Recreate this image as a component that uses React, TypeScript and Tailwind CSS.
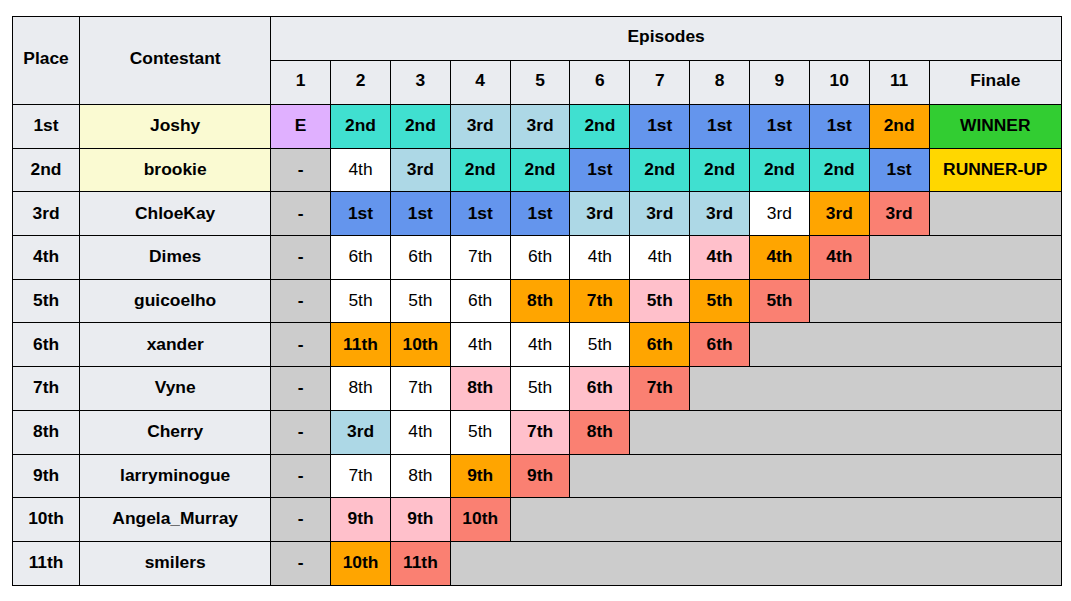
type Tone = 'w' | 'tq' | 'lb' | 'cf' | 'or' | 'pk' | 'sa' | 'mv' | 'gr' | 'gn' | 'gd'

const tones: Record<Tone, string> = {
  w: 'bg-white font-normal',
  tq: 'bg-[#40e0d0] font-bold',
  lb: 'bg-[#add8e6] font-bold',
  cf: 'bg-[#6495ed] font-bold',
  or: 'bg-[#ffa500] font-bold',
  pk: 'bg-[#ffc0cb] font-bold',
  sa: 'bg-[#fa8072] font-bold',
  mv: 'bg-[#e0b0ff] font-bold',
  gr: 'bg-[#cccccc] font-bold',
  gn: 'bg-[#32cd32] font-bold',
  gd: 'bg-[#ffd700] font-bold',
}

type Cell = [string, Tone]

type Row = {
  place: string
  name: string
  finalist?: boolean
  cells: Cell[]
  out?: number
}

const rows: Row[] = [
  {
    place: '1st',
    name: 'Joshy',
    finalist: true,
    cells: [
      ['E', 'mv'], ['2nd', 'tq'], ['2nd', 'tq'], ['3rd', 'lb'], ['3rd', 'lb'], ['2nd', 'tq'],
      ['1st', 'cf'], ['1st', 'cf'], ['1st', 'cf'], ['1st', 'cf'], ['2nd', 'or'], ['WINNER', 'gn'],
    ],
  },
  {
    place: '2nd',
    name: 'brookie',
    finalist: true,
    cells: [
      ['-', 'gr'], ['4th', 'w'], ['3rd', 'lb'], ['2nd', 'tq'], ['2nd', 'tq'], ['1st', 'cf'],
      ['2nd', 'tq'], ['2nd', 'tq'], ['2nd', 'tq'], ['2nd', 'tq'], ['1st', 'cf'], ['RUNNER-UP', 'gd'],
    ],
  },
  {
    place: '3rd',
    name: 'ChloeKay',
    cells: [
      ['-', 'gr'], ['1st', 'cf'], ['1st', 'cf'], ['1st', 'cf'], ['1st', 'cf'], ['3rd', 'lb'],
      ['3rd', 'lb'], ['3rd', 'lb'], ['3rd', 'w'], ['3rd', 'or'], ['3rd', 'sa'],
    ],
    out: 1,
  },
  {
    place: '4th',
    name: 'Dimes',
    cells: [
      ['-', 'gr'], ['6th', 'w'], ['6th', 'w'], ['7th', 'w'], ['6th', 'w'], ['4th', 'w'],
      ['4th', 'w'], ['4th', 'pk'], ['4th', 'or'], ['4th', 'sa'],
    ],
    out: 2,
  },
  {
    place: '5th',
    name: 'guicoelho',
    cells: [
      ['-', 'gr'], ['5th', 'w'], ['5th', 'w'], ['6th', 'w'], ['8th', 'or'], ['7th', 'or'],
      ['5th', 'pk'], ['5th', 'or'], ['5th', 'sa'],
    ],
    out: 3,
  },
  {
    place: '6th',
    name: 'xander',
    cells: [
      ['-', 'gr'], ['11th', 'or'], ['10th', 'or'], ['4th', 'w'], ['4th', 'w'], ['5th', 'w'],
      ['6th', 'or'], ['6th', 'sa'],
    ],
    out: 4,
  },
  {
    place: '7th',
    name: 'Vyne',
    cells: [
      ['-', 'gr'], ['8th', 'w'], ['7th', 'w'], ['8th', 'pk'], ['5th', 'w'], ['6th', 'pk'], ['7th', 'sa'],
    ],
    out: 5,
  },
  {
    place: '8th',
    name: 'Cherry',
    cells: [['-', 'gr'], ['3rd', 'lb'], ['4th', 'w'], ['5th', 'w'], ['7th', 'pk'], ['8th', 'sa']],
    out: 6,
  },
  {
    place: '9th',
    name: 'larryminogue',
    cells: [['-', 'gr'], ['7th', 'w'], ['8th', 'w'], ['9th', 'or'], ['9th', 'sa']],
    out: 7,
  },
  {
    place: '10th',
    name: 'Angela_Murray',
    cells: [['-', 'gr'], ['9th', 'pk'], ['9th', 'pk'], ['10th', 'sa']],
    out: 8,
  },
  {
    place: '11th',
    name: 'smilers',
    cells: [['-', 'gr'], ['10th', 'or'], ['11th', 'sa']],
    out: 9,
  },
]

const episodes = ['1', '2', '3', '4', '5', '6', '7', '8', '9', '10', '11']

// header cells sit a touch higher than body cells in the reference
const headCell = 'border border-black bg-[#eaecf0] p-0 pb-[4px] text-center align-middle font-bold'
const bodyCell = 'border border-black p-0 pb-[2px] text-center align-middle'

export default function App() {
  return (
    <div className="min-h-[601px] w-[1071px] bg-white pl-[12px] pt-[16px] font-['Liberation_Sans',Arial,sans-serif] text-[17.4px] text-black">
      <table className="w-[1050px] table-fixed border-collapse">
        <colgroup>
          <col className="w-[67px]" />
          <col className="w-[191px]" />
          {episodes.map((e) => (
            <col key={e} className="w-[59.8px]" />
          ))}
          <col className="w-[132px]" />
        </colgroup>
        <thead>
          <tr className="h-[44px]">
            <th rowSpan={2} className={headCell}>
              Place
            </th>
            <th rowSpan={2} className={headCell}>
              Contestant
            </th>
            <th colSpan={12} className={headCell}>
              Episodes
            </th>
          </tr>
          <tr className="h-[44px]">
            {episodes.map((e) => (
              <th key={e} className={headCell}>
                {e}
              </th>
            ))}
            <th className={headCell}>Finale</th>
          </tr>
        </thead>
        <tbody>
          {rows.map((row) => (
            <tr key={row.place} className="h-[43.7px]">
              <td className={`${bodyCell} bg-[#eaecf0] font-bold`}>{row.place}</td>
              <td
                className={`${bodyCell} font-bold ${
                  row.finalist ? 'bg-[#fafad2]' : 'bg-[#eaecf0]'
                }`}
              >
                {row.name}
              </td>
              {row.cells.map(([text, tone], i) => (
                <td key={i} className={`${bodyCell} ${tones[tone]}`}>
                  {text}
                </td>
              ))}
              {row.out ? <td colSpan={row.out} className={`${bodyCell} bg-[#cccccc]`} /> : null}
            </tr>
          ))}
        </tbody>
      </table>
    </div>
  )
}
